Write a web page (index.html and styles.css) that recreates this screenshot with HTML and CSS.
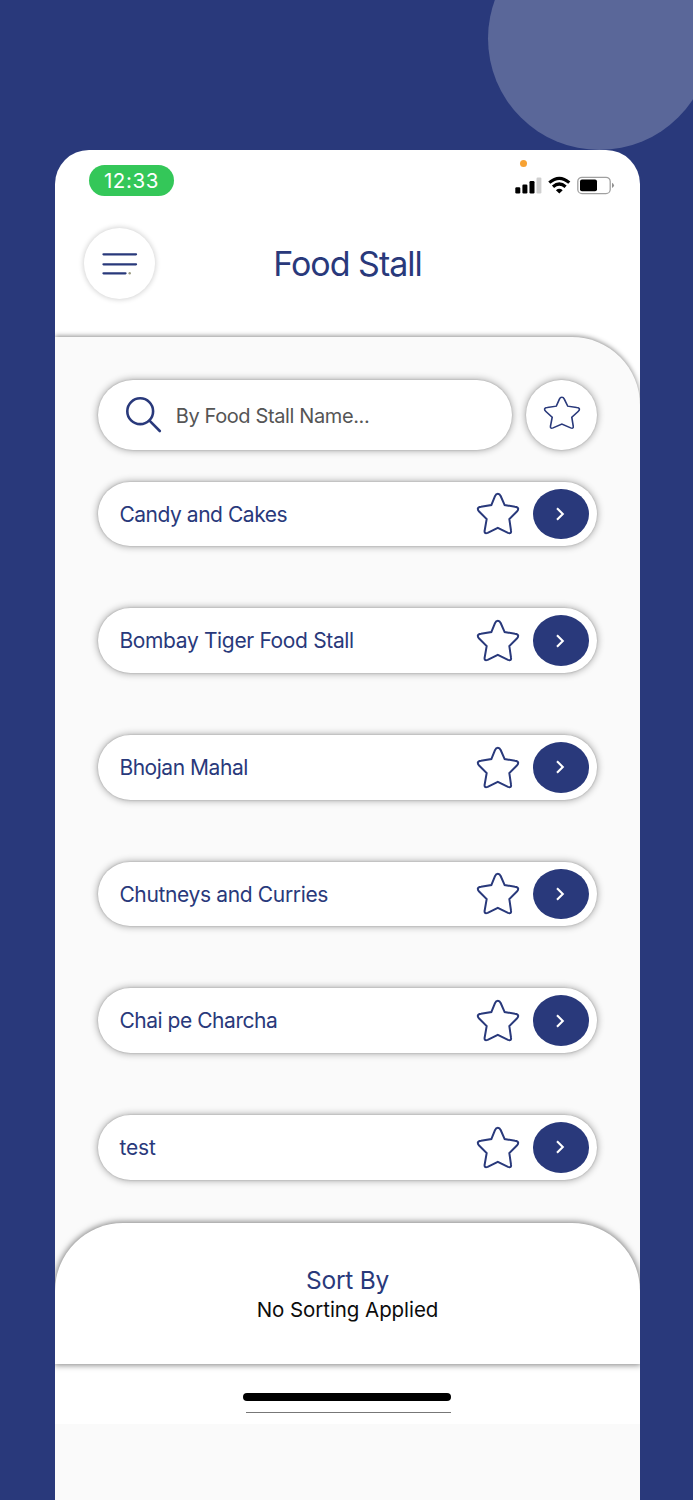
FILE: index.html
```
<!DOCTYPE html>
<html lang="en">
<head>
<meta charset="utf-8">
<title>Food Stall</title>
<link rel="stylesheet" href="styles.css">
</head>
<body>
<svg class="defs" width="0" height="0" aria-hidden="true">
  <symbol id="star" viewBox="-3 -2 132 130" preserveAspectRatio="none">
    <path d="M43 37L54 10Q57 3 62.500 3Q68 3 71 10L83 37L114 42Q123 43 123.500 48Q124 52 119 57L97 79L102 113Q104 124 93 120L62.500 105L32 120Q21 124 23 113L29 79L7 57Q2 52 2.500 48Q3 43 12 42Z"/>
  </symbol>
  <symbol id="chevron" viewBox="0 0 10 14">
    <path d="M2 1.200L7.800 7L2 12.800"/>
  </symbol>
</svg>
<div class="backdrop-circle"></div>
<main class="phone">
  <header class="top">
    <div class="status">
      <span class="clock">12:33</span>
      <span class="mic-dot"></span>
      <svg class="indicators" viewBox="0 0 100 20">
        <rect x="0.3" y="12.2" width="5" height="6.3" rx="1.2"/>
        <rect x="7.4" y="9.6" width="5" height="8.9" rx="1.2"/>
        <rect x="14.5" y="6" width="5" height="12.5" rx="1.2"/>
        <rect class="signal-off" x="21.5" y="2.6" width="4.9" height="15.9" rx="1.2"/>
        <g class="wifi">
          <path d="M34.3 7.6Q44.3 -1 54.3 7.6"/>
          <path d="M38 11.8Q44.3 6.2 50.6 11.8"/>
        </g>
        <path d="M40.9 15.2Q44.3 12.3 47.7 15.2L44.3 18.4Z"/>
        <rect class="battery" x="62.8" y="2.3" width="32.4" height="16.3" rx="4.2"/>
        <rect x="65" y="4.5" width="17" height="11.8" rx="2"/>
        <path class="battery-tip" d="M97 7.8Q101 10.4 97 13Z"/>
      </svg>
    </div>
    <div class="title-bar">
      <button class="menu" aria-label="Menu">
        <svg viewBox="0 0 36 24">
          <path d="M1.5 2.3H34M1.5 12.3H34M1.5 21.3H23.5"/>
          <circle cx="27.7" cy="21.3" r="1.2"/>
        </svg>
      </button>
      <h1 class="title">Food Stall</h1>
    </div>
  </header>
  <section class="panel">
    <div class="search-row">
      <div class="search">
        <svg class="magnifier" viewBox="0 0 36 36">
          <circle cx="14.2" cy="14.2" r="12.9"/>
          <path d="M23.5 23.7L33.8 34"/>
        </svg>
        <span class="placeholder">By Food Stall Name...</span>
      </div>
      <button class="favourites" aria-label="Favourites"><svg class="star-small"><use href="#star"/></svg></button>
    </div>
    <div class="list">
      <div class="stall"><span class="name">Candy and Cakes</span><svg class="star"><use href="#star"/></svg><span class="go"><svg class="chev"><use href="#chevron"/></svg></span></div>
      <div class="stall"><span class="name name-long">Bombay Tiger Food Stall</span><svg class="star"><use href="#star"/></svg><span class="go"><svg class="chev"><use href="#chevron"/></svg></span></div>
      <div class="stall"><span class="name">Bhojan Mahal</span><svg class="star"><use href="#star"/></svg><span class="go"><svg class="chev"><use href="#chevron"/></svg></span></div>
      <div class="stall"><span class="name name-long">Chutneys and Curries</span><svg class="star"><use href="#star"/></svg><span class="go"><svg class="chev"><use href="#chevron"/></svg></span></div>
      <div class="stall"><span class="name">Chai pe Charcha</span><svg class="star"><use href="#star"/></svg><span class="go"><svg class="chev"><use href="#chevron"/></svg></span></div>
      <div class="stall"><span class="name name-short">test</span><svg class="star"><use href="#star"/></svg><span class="go"><svg class="chev"><use href="#chevron"/></svg></span></div>
    </div>
  </section>
  <section class="sort">
    <div class="sort-title">Sort By</div>
    <div class="sort-value">No Sorting Applied</div>
  </section>
  <footer class="home">
    <div class="home-bar"></div>
    <div class="home-line"></div>
  </footer>
</main>
</body>
</html>
```
FILE: styles.css
```
* { box-sizing: border-box; }
body {
  display: flow-root;
  margin: 0;
  height: 1500px;
  overflow: hidden;
  position: relative;
  background: #29397b;
  font-family: Inter, "Liberation Sans", sans-serif;
  color: #29397b;
}
.defs { position: absolute; }
svg { display: block; flex: none; }
button { border: 0; padding: 0; background: #fff; color: inherit; }
.backdrop-circle {
  position: absolute;
  left: 488px;
  top: -73px;
  width: 223px;
  height: 223px;
  border-radius: 50%;
  background: #5a6799;
}
.phone {
  position: relative;
  margin: 150.4px 0 0 55.4px;
  width: 584.2px;
  height: 1349.6px;
  border-radius: 34px 34px 0 0;
  overflow: hidden;
  background: linear-gradient(#fff 600px, #fafafa 600px);
  display: flex;
  flex-direction: column;
}
.top { height: 187px; flex: none; }
.status { height: 77px; padding: 14.3px 25px 0 33.3px; display: flex; align-items: flex-start; position: relative; }
.clock {
  width: 85.5px;
  height: 31px;
  border-radius: 15.5px;
  background: #34c759;
  color: #fff;
  font-size: 20.5px;
  line-height: 32px;
  letter-spacing: 0.6px;
  text-align: center;
}
.mic-dot {
  position: absolute;
  left: 464.8px;
  top: 9.2px;
  width: 7px;
  height: 7px;
  border-radius: 50%;
  background: #f7a233;
}
.indicators { width: 100px; height: 20px; margin: 10.3px 0 0 auto; }
.signal-off { fill: #cfcfcf; }
.wifi { fill: none; stroke: #000; stroke-width: 3.2; }
.battery { fill: none; stroke: #a0a0a0; stroke-width: 1.3; }
.battery-tip { fill: #909090; }
.title-bar { display: grid; grid-template-columns: 71px 1fr 71px; padding: 0 28.6px; }
.menu {
  width: 71px;
  height: 71px;
  margin-top: 0.9px;
  border-radius: 50%;
  box-shadow: 0 0 5px 1px rgba(0,0,0,.17);
  display: grid;
  place-items: center;
}
.menu svg { width: 36px; height: 24px; margin-left: 1px; fill: #9a9a80; stroke: #29397b; stroke-width: 2.3; stroke-linecap: round; }
.menu circle { stroke: none; }
.title { margin: 0; font-size: 34px; font-weight: 400; line-height: 74px; text-align: center; letter-spacing: -1px; }
.panel {
  position: relative;
  height: 950px;
  margin-bottom: -64px;
  flex: none;
  padding: 42.2px 42.8px 0;
  background: #fafafa;
  border-radius: 0 68px 0 0;
  box-shadow: 0 -1px 5px rgba(0,0,0,.45);
}
.search-row { display: flex; justify-content: space-between; }
.search, .favourites, .stall {
  background: #fff;
  box-shadow: 0 0 1.5px 0.5px rgba(0,0,0,.12), 0 0 7px 1px rgba(0,0,0,.3);
}
.search { width: 413.5px; height: 70.5px; border-radius: 36px; display: flex; align-items: center; padding-left: 28px; gap: 13.5px; }
.magnifier { width: 36px; height: 36px; fill: none; stroke: #29397b; stroke-width: 2.6; stroke-linecap: round; }
.placeholder { color: #555; font-size: 20px; line-height: 28px; letter-spacing: -0.38px; white-space: nowrap; padding-top: 2px; }
.favourites { width: 70.5px; height: 70.5px; border-radius: 50%; display: grid; place-items: center; }
.star-small { width: 38px; height: 34px; margin-bottom: 3px; fill: none; stroke: #29397b; stroke-width: 5.6; }
.list { display: flex; flex-direction: column; gap: 62px; padding-top: 31.5px; }
.stall { height: 64.7px; border-radius: 33px; display: flex; align-items: center; padding: 0 7.5px 0 21.2px; }
.name { flex: 1; font-size: 21px; line-height: 30px; letter-spacing: -0.46px; white-space: nowrap; padding-top: 1.4px; }
.name-long { letter-spacing: -0.35px; }
.name-short { letter-spacing: -0.1px; }
.star { width: 44px; height: 43.5px; margin-right: 13px; fill: none; stroke: #29397b; stroke-width: 6; }
.go { width: 56px; height: 50.6px; border-radius: 50%; background: #29397b; display: grid; place-items: center; }
.chev { width: 10px; height: 14px; margin-right: 3px; fill: none; stroke: #fff; stroke-width: 2.1; }
.sort {
  position: relative;
  z-index: 1;
  height: 141px;
  flex: none;
  padding-top: 41.8px;
  background: #fff;
  border-radius: 68px 68px 0 0;
  box-shadow: 0 0 6px 1px rgba(0,0,0,.5);
  text-align: center;
}
.sort-title { font-size: 24.5px; line-height: 31px; letter-spacing: -0.25px; }
.sort-value { font-size: 20.5px; line-height: 28px; letter-spacing: -0.07px; color: #0c0c0c; }
.home { position: relative; height: 59.5px; background: #fff; padding-top: 29px; flex: none; display: flex; flex-direction: column; align-items: center; gap: 11px; }
.home-bar { width: 208px; height: 7.3px; border-radius: 4px; background: #000; }
.home-line { width: 205px; height: 1px; margin-left: 3px; background: #777; }
```
